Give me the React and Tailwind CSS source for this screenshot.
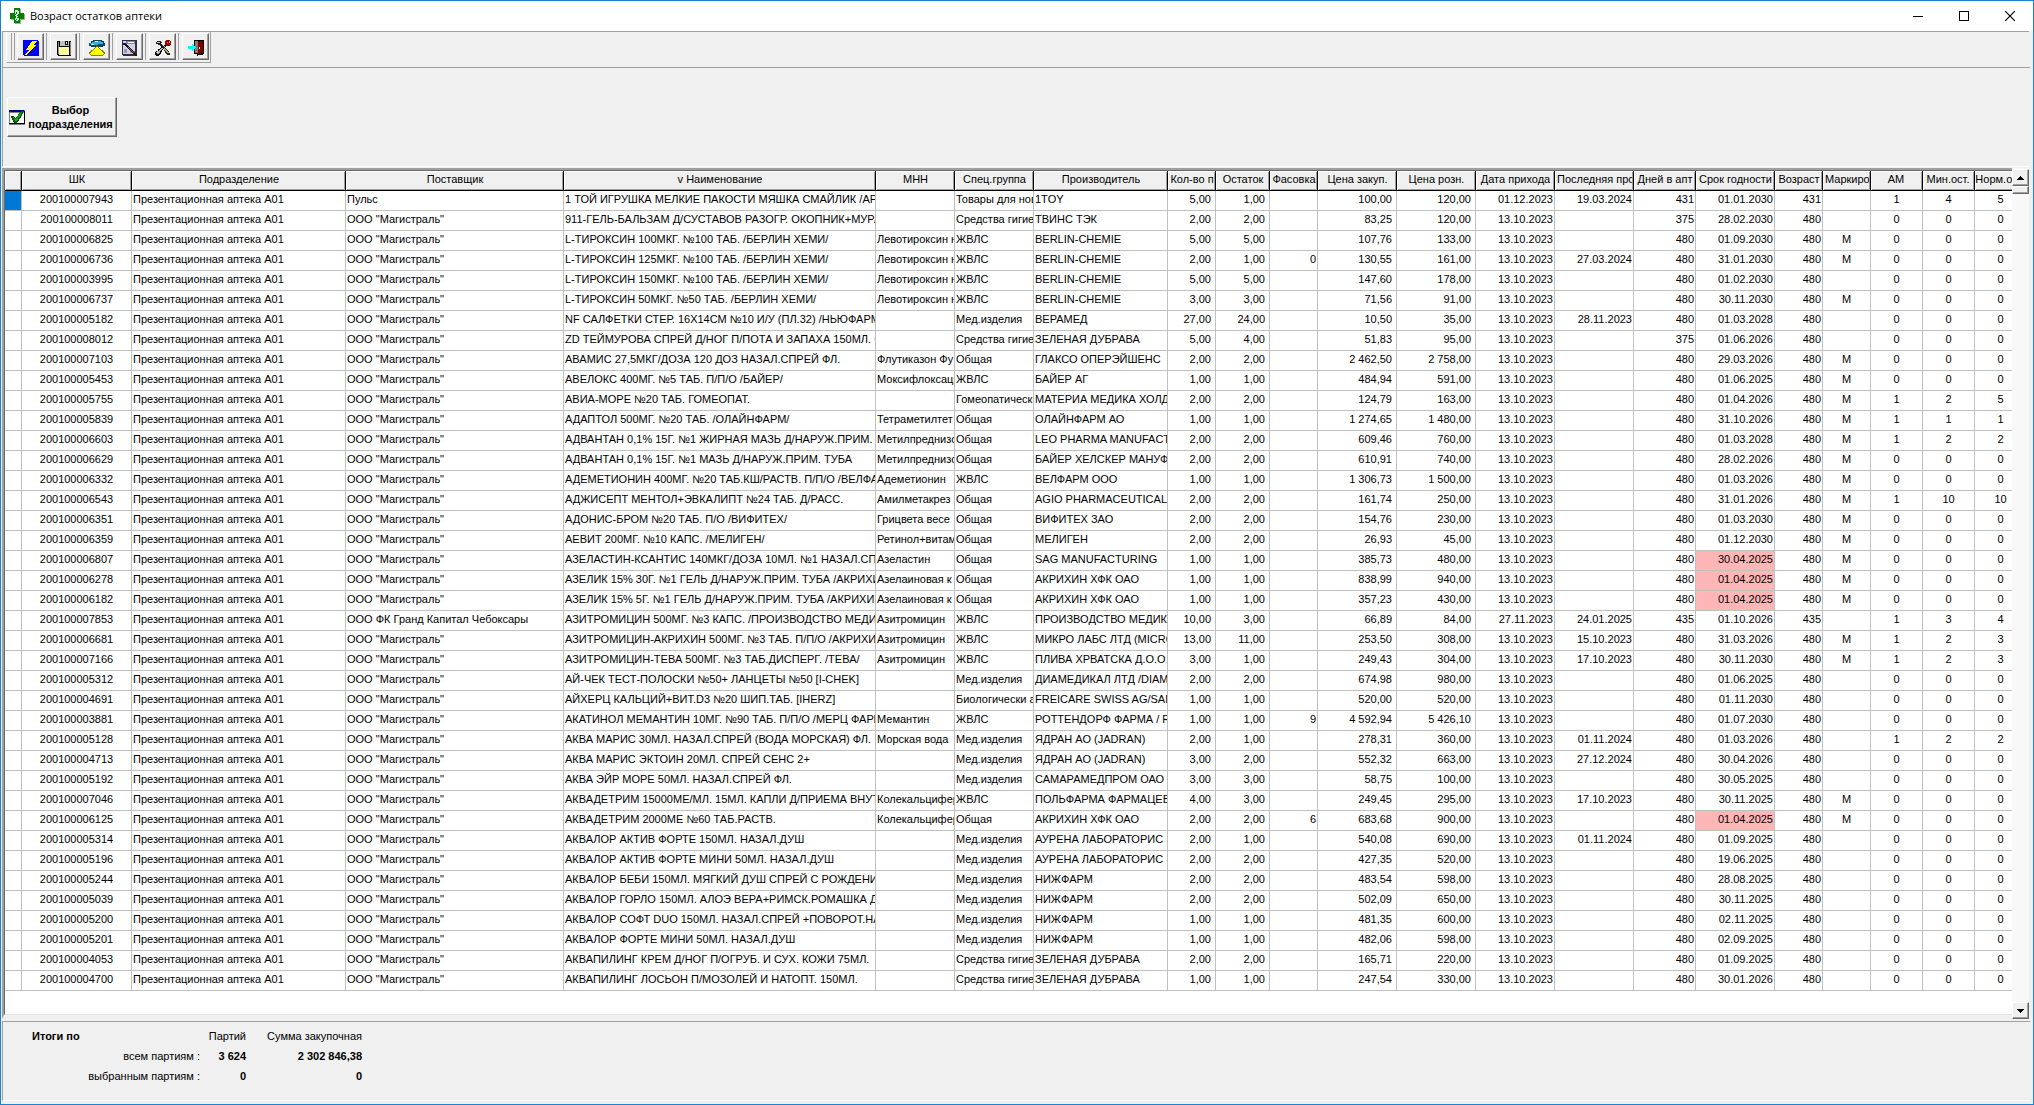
import clsx from 'clsx'

const COLUMNS = [
  { title: '', width: 'w-[17px]' },
  { title: 'ШК', width: 'w-[110px]', align: 'text-center' },
  { title: 'Подразделение', width: 'w-[214px]', align: 'text-left pl-px' },
  { title: 'Поставщик', width: 'w-[218px]', align: 'text-left pl-px' },
  { title: 'v Наименование', width: 'w-[312px]', align: 'text-left pl-px' },
  { title: 'МНН', width: 'w-[79px]', align: 'text-left pl-px' },
  { title: 'Спец.группа', width: 'w-[79px]', align: 'text-left pl-px' },
  { title: 'Производитель', width: 'w-[134px]', align: 'text-left pl-px' },
  { title: 'Кол-во п', width: 'w-[48px]', align: 'text-right pr-1' },
  { title: 'Остаток', width: 'w-[54px]', align: 'text-right pr-1' },
  { title: 'Фасовка', width: 'w-[48px]', align: 'text-right pr-px' },
  { title: 'Цена закуп.', width: 'w-[79px]', align: 'text-right pr-1' },
  { title: 'Цена розн.', width: 'w-[79px]', align: 'text-right pr-1' },
  { title: 'Дата прихода', width: 'w-[79px]', align: 'text-right pr-px' },
  { title: 'Последняя про', width: 'w-[79px]', align: 'text-right pr-px' },
  { title: 'Дней в апт', width: 'w-[62px]', align: 'text-right pr-px' },
  { title: 'Срок годности', width: 'w-[79px]', align: 'text-right pr-px' },
  { title: 'Возраст', width: 'w-[48px]', align: 'text-right pr-px' },
  { title: 'Маркиро', width: 'w-[48px]', align: 'text-center' },
  { title: 'АМ', width: 'w-[52px]', align: 'text-center' },
  { title: 'Мин.ост.', width: 'w-[52px]', align: 'text-center' },
  { title: 'Норм.ост.', width: 'w-[52px]', align: 'text-center' },
]

const EXPIRY = 16
const EXPIRING = ['30.04.2025', '01.04.2025']

const DEPT = 'Презентационная аптека А01'
const MAG = 'ООО "Магистраль"'
const D = '13.10.2023'

// code, supplier, name, INN, group, maker, qty, rest, pack, buy, sell, arrived, last sale, days, expiry, age, mark, AM, min, norm
const ROWS = [
  ['200100007943', 'Пульс', '1 ТОЙ ИГРУШКА МЕЛКИЕ ПАКОСТИ МЯШКА СМАЙЛИК /АР', '', 'Товары для нов', '1TOY', '5,00', '1,00', '', '100,00', '120,00', '01.12.2023', '19.03.2024', 431, '01.01.2030', 431, '', 1, 4, 5],
  ['200100008011', MAG, '911-ГЕЛЬ-БАЛЬЗАМ Д/СУСТАВОВ РАЗОГР. ОКОПНИК+МУРА', '', 'Средства гигие', 'ТВИНС ТЭК', '2,00', '2,00', '', '83,25', '120,00', D, '', 375, '28.02.2030', 480, '', 0, 0, 0],
  ['200100006825', MAG, 'L-ТИРОКСИН 100МКГ. №100 ТАБ. /БЕРЛИН ХЕМИ/', 'Левотироксин н', 'ЖВЛС', 'BERLIN-CHEMIE', '5,00', '5,00', '', '107,76', '133,00', D, '', 480, '01.09.2030', 480, 'M', 0, 0, 0],
  ['200100006736', MAG, 'L-ТИРОКСИН 125МКГ. №100 ТАБ. /БЕРЛИН ХЕМИ/', 'Левотироксин н', 'ЖВЛС', 'BERLIN-CHEMIE', '2,00', '1,00', '0', '130,55', '161,00', D, '27.03.2024', 480, '31.01.2030', 480, 'M', 0, 0, 0],
  ['200100003995', MAG, 'L-ТИРОКСИН 150МКГ. №100 ТАБ. /БЕРЛИН ХЕМИ/', 'Левотироксин н', 'ЖВЛС', 'BERLIN-CHEMIE', '5,00', '5,00', '', '147,60', '178,00', D, '', 480, '01.02.2030', 480, '', 0, 0, 0],
  ['200100006737', MAG, 'L-ТИРОКСИН 50МКГ. №50 ТАБ. /БЕРЛИН ХЕМИ/', 'Левотироксин н', 'ЖВЛС', 'BERLIN-CHEMIE', '3,00', '3,00', '', '71,56', '91,00', D, '', 480, '30.11.2030', 480, 'M', 0, 0, 0],
  ['200100005182', MAG, 'NF САЛФЕТКИ СТЕР. 16Х14СМ №10 И/У (ПЛ.32) /НЬЮФАРМ/', '', 'Мед.изделия', 'ВЕРАМЕД', '27,00', '24,00', '', '10,50', '35,00', D, '28.11.2023', 480, '01.03.2028', 480, '', 0, 0, 0],
  ['200100008012', MAG, 'ZD ТЕЙМУРОВА СПРЕЙ Д/НОГ П/ПОТА И ЗАПАХА 150МЛ. ФЛ', '', 'Средства гигие', 'ЗЕЛЕНАЯ ДУБРАВА', '5,00', '4,00', '', '51,83', '95,00', D, '', 375, '01.06.2026', 480, '', 0, 0, 0],
  ['200100007103', MAG, 'АВАМИС 27,5МКГ/ДОЗА 120 ДОЗ НАЗАЛ.СПРЕЙ ФЛ.', 'Флутиказон Фу', 'Общая', 'ГЛАКСО ОПЕРЭЙШЕНС', '2,00', '2,00', '', '2 462,50', '2 758,00', D, '', 480, '29.03.2026', 480, 'M', 0, 0, 0],
  ['200100005453', MAG, 'АВЕЛОКС 400МГ. №5 ТАБ. П/П/О /БАЙЕР/', 'Моксифлоксаци', 'ЖВЛС', 'БАЙЕР АГ', '1,00', '1,00', '', '484,94', '591,00', D, '', 480, '01.06.2025', 480, 'M', 0, 0, 0],
  ['200100005755', MAG, 'АВИА-МОРЕ №20 ТАБ. ГОМЕОПАТ.', '', 'Гомеопатическ', 'МАТЕРИА МЕДИКА ХОЛД', '2,00', '2,00', '', '124,79', '163,00', D, '', 480, '01.04.2026', 480, 'M', 1, 2, 5],
  ['200100005839', MAG, 'АДАПТОЛ 500МГ. №20 ТАБ. /ОЛАЙНФАРМ/', 'Тетраметилтет', 'Общая', 'ОЛАЙНФАРМ АО', '1,00', '1,00', '', '1 274,65', '1 480,00', D, '', 480, '31.10.2026', 480, 'M', 1, 1, 1],
  ['200100006603', MAG, 'АДВАНТАН 0,1% 15Г. №1 ЖИРНАЯ МАЗЬ Д/НАРУЖ.ПРИМ.', 'Метилпреднизо', 'Общая', 'LEO PHARMA MANUFACTU', '2,00', '2,00', '', '609,46', '760,00', D, '', 480, '01.03.2028', 480, 'M', 1, 2, 2],
  ['200100006629', MAG, 'АДВАНТАН 0,1% 15Г. №1 МАЗЬ Д/НАРУЖ.ПРИМ. ТУБА', 'Метилпреднизо', 'Общая', 'БАЙЕР ХЕЛСКЕР МАНУФЭ', '2,00', '2,00', '', '610,91', '740,00', D, '', 480, '28.02.2026', 480, 'M', 0, 0, 0],
  ['200100006332', MAG, 'АДЕМЕТИОНИН 400МГ. №20 ТАБ.КШ/РАСТВ. П/П/О /ВЕЛФАР', 'Адеметионин', 'ЖВЛС', 'ВЕЛФАРМ ООО', '1,00', '1,00', '', '1 306,73', '1 500,00', D, '', 480, '01.03.2026', 480, 'M', 0, 0, 0],
  ['200100006543', MAG, 'АДЖИСЕПТ МЕНТОЛ+ЭВКАЛИПТ №24 ТАБ. Д/РАСС.', 'Амилметакрез', 'Общая', 'AGIO PHARMACEUTICAL LT', '2,00', '2,00', '', '161,74', '250,00', D, '', 480, '31.01.2026', 480, 'M', 1, 10, 10],
  ['200100006351', MAG, 'АДОНИС-БРОМ №20 ТАБ. П/О /ВИФИТЕХ/', 'Грицвета весе', 'Общая', 'ВИФИТЕХ ЗАО', '2,00', '2,00', '', '154,76', '230,00', D, '', 480, '01.03.2030', 480, 'M', 0, 0, 0],
  ['200100006359', MAG, 'АЕВИТ 200МГ. №10 КАПС. /МЕЛИГЕН/', 'Ретинол+витам', 'Общая', 'МЕЛИГЕН', '2,00', '2,00', '', '26,93', '45,00', D, '', 480, '01.12.2030', 480, 'M', 0, 0, 0],
  ['200100006807', MAG, 'АЗЕЛАСТИН-КСАНТИС 140МКГ/ДОЗА 10МЛ. №1 НАЗАЛ.СПР', 'Азеластин', 'Общая', 'SAG MANUFACTURING', '1,00', '1,00', '', '385,73', '480,00', D, '', 480, '30.04.2025', 480, 'M', 0, 0, 0],
  ['200100006278', MAG, 'АЗЕЛИК 15% 30Г. №1 ГЕЛЬ Д/НАРУЖ.ПРИМ. ТУБА /АКРИХИ', 'Азелаиновая к', 'Общая', 'АКРИХИН ХФК ОАО', '1,00', '1,00', '', '838,99', '940,00', D, '', 480, '01.04.2025', 480, 'M', 0, 0, 0],
  ['200100006182', MAG, 'АЗЕЛИК 15% 5Г. №1 ГЕЛЬ Д/НАРУЖ.ПРИМ. ТУБА /АКРИХИ', 'Азелаиновая к', 'Общая', 'АКРИХИН ХФК ОАО', '1,00', '1,00', '', '357,23', '430,00', D, '', 480, '01.04.2025', 480, 'M', 0, 0, 0],
  ['200100007853', 'ООО ФК Гранд Капитал Чебоксары', 'АЗИТРОМИЦИН 500МГ. №3 КАПС. /ПРОИЗВОДСТВО МЕДИК', 'Азитромицин', 'ЖВЛС', 'ПРОИЗВОДСТВО МЕДИКА', '10,00', '3,00', '', '66,89', '84,00', '27.11.2023', '24.01.2025', 435, '01.10.2026', 435, '', 1, 3, 4],
  ['200100006681', MAG, 'АЗИТРОМИЦИН-АКРИХИН 500МГ. №3 ТАБ. П/П/О /АКРИХИ', 'Азитромицин', 'ЖВЛС', 'МИКРО ЛАБС ЛТД (MICRO', '13,00', '11,00', '', '253,50', '308,00', D, '15.10.2023', 480, '31.03.2026', 480, 'M', 1, 2, 3],
  ['200100007166', MAG, 'АЗИТРОМИЦИН-ТЕВА 500МГ. №3 ТАБ.ДИСПЕРГ. /ТЕВА/', 'Азитромицин', 'ЖВЛС', 'ПЛИВА ХРВАТСКА Д.О.О.', '3,00', '1,00', '', '249,43', '304,00', D, '17.10.2023', 480, '30.11.2030', 480, 'M', 1, 2, 3],
  ['200100005312', MAG, 'АЙ-ЧЕК ТЕСТ-ПОЛОСКИ №50+ ЛАНЦЕТЫ №50 [I-CHEK]', '', 'Мед.изделия', 'ДИАМЕДИКАЛ ЛТД /DIAM', '2,00', '2,00', '', '674,98', '980,00', D, '', 480, '01.06.2025', 480, '', 0, 0, 0],
  ['200100004691', MAG, 'АЙХЕРЦ КАЛЬЦИЙ+ВИТ.D3 №20 ШИП.ТАБ. [IHERZ]', '', 'Биологически а', 'FREICARE SWISS AG/SANO', '1,00', '1,00', '', '520,00', '520,00', D, '', 480, '01.11.2030', 480, '', 0, 0, 0],
  ['200100003881', MAG, 'АКАТИНОЛ МЕМАНТИН 10МГ. №90 ТАБ. П/П/О /МЕРЦ ФАРМА', 'Мемантин', 'ЖВЛС', 'РОТТЕНДОРФ ФАРМА / RO', '1,00', '1,00', '9', '4 592,94', '5 426,10', D, '', 480, '01.07.2030', 480, '', 0, 0, 0],
  ['200100005128', MAG, 'АКВА МАРИС 30МЛ. НАЗАЛ.СПРЕЙ (ВОДА МОРСКАЯ) ФЛ.', 'Морская вода', 'Мед.изделия', 'ЯДРАН АО (JADRAN)', '2,00', '1,00', '', '278,31', '360,00', D, '01.11.2024', 480, '01.03.2026', 480, '', 1, 2, 2],
  ['200100004713', MAG, 'АКВА МАРИС ЭКТОИН 20МЛ. СПРЕЙ СЕНС 2+', '', 'Мед.изделия', 'ЯДРАН АО (JADRAN)', '3,00', '2,00', '', '552,32', '663,00', D, '27.12.2024', 480, '30.04.2026', 480, '', 0, 0, 0],
  ['200100005192', MAG, 'АКВА ЭЙР МОРЕ 50МЛ. НАЗАЛ.СПРЕЙ ФЛ.', '', 'Мед.изделия', 'САМАРАМЕДПРОМ ОАО', '3,00', '3,00', '', '58,75', '100,00', D, '', 480, '30.05.2025', 480, '', 0, 0, 0],
  ['200100007046', MAG, 'АКВАДЕТРИМ 15000МЕ/МЛ. 15МЛ. КАПЛИ Д/ПРИЕМА ВНУТР', 'Колекальцифер', 'ЖВЛС', 'ПОЛЬФАРМА ФАРМАЦЕВТ', '4,00', '3,00', '', '249,45', '295,00', D, '17.10.2023', 480, '30.11.2025', 480, 'M', 0, 0, 0],
  ['200100006125', MAG, 'АКВАДЕТРИМ 2000МЕ №60 ТАБ.РАСТВ.', 'Колекальцифер', 'Общая', 'АКРИХИН ХФК ОАО', '2,00', '2,00', '6', '683,68', '900,00', D, '', 480, '01.04.2025', 480, 'M', 0, 0, 0],
  ['200100005314', MAG, 'АКВАЛОР АКТИВ ФОРТЕ 150МЛ. НАЗАЛ.ДУШ', '', 'Мед.изделия', 'АУРЕНА ЛАБОРАТОРИС Э', '2,00', '1,00', '', '540,08', '690,00', D, '01.11.2024', 480, '01.09.2025', 480, '', 0, 0, 0],
  ['200100005196', MAG, 'АКВАЛОР АКТИВ ФОРТЕ МИНИ 50МЛ. НАЗАЛ.ДУШ', '', 'Мед.изделия', 'АУРЕНА ЛАБОРАТОРИС Э', '2,00', '2,00', '', '427,35', '520,00', D, '', 480, '19.06.2025', 480, '', 0, 0, 0],
  ['200100005244', MAG, 'АКВАЛОР БЕБИ 150МЛ. МЯГКИЙ ДУШ СПРЕЙ С РОЖДЕНИЯ', '', 'Мед.изделия', 'НИЖФАРМ', '2,00', '2,00', '', '483,54', '598,00', D, '', 480, '28.08.2025', 480, '', 0, 0, 0],
  ['200100005039', MAG, 'АКВАЛОР ГОРЛО 150МЛ. АЛОЭ ВЕРА+РИМСК.РОМАШКА ДУ', '', 'Мед.изделия', 'НИЖФАРМ', '2,00', '2,00', '', '502,09', '650,00', D, '', 480, '30.11.2025', 480, '', 0, 0, 0],
  ['200100005200', MAG, 'АКВАЛОР СОФТ DUO 150МЛ. НАЗАЛ.СПРЕЙ +ПОВОРОТ.НАС.', '', 'Мед.изделия', 'НИЖФАРМ', '1,00', '1,00', '', '481,35', '600,00', D, '', 480, '02.11.2025', 480, '', 0, 0, 0],
  ['200100005201', MAG, 'АКВАЛОР ФОРТЕ МИНИ 50МЛ. НАЗАЛ.ДУШ', '', 'Мед.изделия', 'НИЖФАРМ', '1,00', '1,00', '', '482,06', '598,00', D, '', 480, '02.09.2025', 480, '', 0, 0, 0],
  ['200100004053', MAG, 'АКВАПИЛИНГ КРЕМ Д/НОГ П/ОГРУБ. И СУХ. КОЖИ 75МЛ.', '', 'Средства гигие', 'ЗЕЛЕНАЯ ДУБРАВА', '2,00', '2,00', '', '165,71', '220,00', D, '', 480, '01.09.2025', 480, '', 0, 0, 0],
  ['200100004700', MAG, 'АКВАПИЛИНГ ЛОСЬОН П/МОЗОЛЕЙ И НАТОПТ. 150МЛ.', '', 'Средства гигие', 'ЗЕЛЕНАЯ ДУБРАВА', '1,00', '1,00', '', '247,54', '330,00', D, '', 480, '30.01.2026', 480, '', 0, 0, 0],
]

const RAISED = 'border border-t-white border-l-white border-r-[#696969] border-b-[#696969] shadow-[inset_-1px_-1px_0_#a0a0a0]'

function Pixels({ children, className = 'w-4 h-4' }) {
  return (
    <svg viewBox="0 0 16 16" className={className} shapeRendering="crispEdges" aria-hidden="true">
      {children}
    </svg>
  )
}

function AppIcon() {
  return (
    <Pixels>
      <path d="M6 1h6v5h4v6h-4v4H6v-4H2V6h4z" fill="#a8a8a8" />
      <path d="M5 0h6v5h4v6h-4v4H5v-4H1V5h4z" fill="#008000" />
      <path d="M6 2h3v1h1v3H9v1H8v1h1v1H8v1h2v2H9v1H7v-1H6v-2h1V8H6V7h1V6H6z" fill="#d8f0d8" />
      <path d="M7 4h1v2H7zM8 9h1v1H8zM7 11h1v1H7z" fill="#008000" />
    </Pixels>
  )
}

function LightningIcon() {
  return (
    <Pixels>
      <path d="M0 0h15v1h1v15H1v-1H0z" fill="#0000ff" />
      <path d="M9 1h5v1h-1v1h-1v1h-1v1h2v1h-1v1h-1v1h-1v1H9v1H8v1H7v1H6v1H5v1H4v1H2v-1h1v-1h1v-1h1v-1h1v-1H3V9h1V8h1V6h1V5h1V3h1V2h1z" fill="#ffff00" />
      <path d="M13 2h1v1h-1zM12 3h1v1h-1zM12 6h1v1h-1zM11 7h1v1h-1zM10 8h1v1h-1zM9 9h1v1H9zM8 10h1v1H8zM7 11h1v1H7zM6 12h1v1H6zM5 13h1v1H5z" fill="#000" />
    </Pixels>
  )
}

function FloppyIcon() {
  return (
    <Pixels>
      <path d="M1 1h14v15H2v-1H1z" fill="#000" />
      <path d="M2 2h1v12H2z" fill="#909090" />
      <path d="M4 1h9v5H4z" fill="#c0c0c0" />
      <path d="M9 1h3v4H9z" fill="#000" />
      <path d="M10 2h1v2h-1z" fill="#fff" />
      <path d="M3 7h10v8H3z" fill="#ffff9c" />
      <path d="M14 2h1v13h-1z" fill="#808080" />
    </Pixels>
  )
}

function LampIcon() {
  return (
    <Pixels>
      <path d="M7 6h2v1h1v1h1v1h1v1h2v1h1v1h1v2h-1v1h-1v1H2v-1H1v-1H0v-2h1v-1h1v-1h2V9h1V8h1V7h1z" fill="#808000" />
      <path d="M7 7h2v1h1v1h1v1h1v1h1v1h1v1h1v1h-1v1H2v-1H1v-1h1v-1h1v-1h1v-1h1V9h1V8h1z" fill="#ffff00" />
      <path d="M4 0h9v1h2v2h1v3h-2v1H9V6H7v1H2V6H0V3h2V1h2z" fill="#004868" />
      <path d="M5 1h7v1h2v2H9v1H4V4H1V3h2V2h2z" fill="#48a8d8" />
      <path d="M6 1h3v1H6zM2 4h3v1H2z" fill="#c0f0ff" />
    </Pixels>
  )
}

function EditFormIcon() {
  return (
    <Pixels>
      <path d="M0 0h15v16H1v-1H0z" fill="#303040" />
      <path d="M1 1h12v13H1z" fill="#d0d0e8" />
      <path d="M4 1h9v3H4z" fill="#8080d8" />
      <path d="M6 2h6v1H6z" fill="#fff" />
      <path d="M2 9h3v4H2zM8 11h5v2H8z" fill="#9898b0" />
      <path d="M1 3h3v1h1v1h1v1h1v1h1v1h1v1h1v1h1v1h1v1h1v1h1v1h1v2h-2v-1h-1v-1h-1v-1h-1v-1H9v-1H8v-1H7V9H6V8H5V7H4V6H3V5H1z" fill="#201818" />
      <path d="M6 7h1v1h1v1h1v1h1v1h1v1h1v1h-1v-1h-1v-1H9v-1H8V9H7V8H6z" fill="#905840" />
    </Pixels>
  )
}

function ToolsIcon() {
  return (
    <Pixels>
      <path d="M11 0h4v1h1v4h-1v1h-4V5h-1V1h1z" fill="#900000" />
      <path d="M12 2h1v1h-1zM14 1h1v2h-1z" fill="#ff8080" />
      <path d="M9 5h2v2h-1v1H9v1H8v1H7v2H6v2H5v1H4v1H1v-1H0v-3h1v-1h2V9h2V8h1V7h2V6h1z" fill="#000" />
      <path d="M9 6h1v1H9v1H8v1H7v1H6v1H5v2H4v1H2v-1H1v-1h1v-1h2v-1h1V9h1V8h2V7h1z" fill="#b8b8b8" />
      <path d="M1 2h1V1h4v1h1v1H6v1h1v1h1v1h1v1h1v1h1v1h1v1h1v1h1v2h1v2h-3v-1h-1v-1h-1v-2H9V9H8V8H7V7H6V6H5V5H3V4H1z" fill="#202020" />
      <path d="M2 2h3v1H2z" fill="#c8c8c8" />
      <path d="M9 8h1v1h1v1h1v1h1v1h1v1h-2v-1h-1v-1h-1v-1H9z" fill="#c0b080" />
    </Pixels>
  )
}

function ExitIcon() {
  return (
    <Pixels>
      <path d="M6 0h10v14h-1v1h-5v1H9v-2H6z" fill="#000" />
      <path d="M7 1h3v12H7z" fill="#808080" />
      <path d="M10 2h2V1h3v12h-2v1h-3z" fill="#800000" />
      <path d="M11 7h1v2h-1z" fill="#fff" />
      <path d="M0 6h4V4h1v1h1v1h1v1h1v1H7v1H6v1H5v1H4V9H0z" fill="#00ffff" />
    </Pixels>
  )
}

function CheckIcon() {
  return (
    <Pixels className="w-4 h-4 shrink-0">
      <path d="M0 1h16v15H0z" fill="#808080" />
      <path d="M1 4h14v10H1z" fill="#fff" />
      <path d="M0 1h15v2H0z" fill="#000080" />
      <path d="M0 14h16v1H0zM15 2h1v13h-1z" fill="#000" />
      <path d="M12 2h3v1h-1v2h-1v2h-1v2h-1v1h-1v2H9v1H8v1H5v-1H4v-2H3V9H2V7h3v1h1v1h1V8h1V7h1V5h1V4h1V3h1z" fill="#006000" />
      <path d="M12 3h1v1h-1v2h-1v2h-1v1H9v2H8v1H6v-1H5V9H4V8h1v1h1v1h1V9h1V8h1V6h1V5h1V4h1z" fill="#20a020" />
    </Pixels>
  )
}

const TOOLS = [
  { label: 'Обновить', Icon: LightningIcon },
  { label: 'Сохранить', Icon: FloppyIcon },
  { label: 'Фильтр', Icon: LampIcon },
  { label: 'Редактировать', Icon: EditFormIcon },
  { label: 'Настройки', Icon: ToolsIcon },
  { label: 'Выход', Icon: ExitIcon },
]

function TitleBar() {
  return (
    <header className="flex items-center h-[30px] pl-2 bg-white">
      <AppIcon />
      <h1 className="ml-[5px] flex-1 font-['Open_Sans','Noto_Sans',sans-serif] text-[11px]">Возраст остатков аптеки</h1>
      <button aria-label="Свернуть" className="w-[46px] h-[30px] flex items-center justify-center">
        <svg viewBox="0 0 10 10" className="w-2.5 h-2.5" shapeRendering="crispEdges"><path d="M0 5h10v1H0z" /></svg>
      </button>
      <button aria-label="Развернуть" className="w-[46px] h-[30px] flex items-center justify-center">
        <svg viewBox="0 0 10 10" className="w-2.5 h-2.5" shapeRendering="crispEdges"><path d="M0 0h10v10H0zM1 1v8h8V1z" fillRule="evenodd" /></svg>
      </button>
      <button aria-label="Закрыть" className="w-[46px] h-[30px] flex items-center justify-center">
        <svg viewBox="0 0 10 10" className="w-2.5 h-2.5"><path d="M0 0l10 10M10 0L0 10" stroke="#000" strokeWidth="1.2" /></svg>
      </button>
    </header>
  )
}

function Toolbar() {
  return (
    <div className="h-9 ml-px mr-1 border-t border-l border-[#a0a0a0]">
      <div className="h-[31px] w-[205px] ml-[3px] flex items-start pt-px border-l border-l-white border-r border-r-[#a0a0a0] border-b border-b-[#a0a0a0]">
        <span className="w-px h-[27px] ml-1 bg-[#a0a0a0]" />
        <span className="w-px h-[27px] ml-0.5 bg-[#a0a0a0]" />
        <div className="flex gap-0.5 ml-0.5">
          {TOOLS.map(({ label, Icon }, i) => (
            <div key={label} className="flex gap-[3px]">
              {i > 0 && <span className="w-px h-[27px] bg-[#a0a0a0]" />}
              <button aria-label={label} className={clsx('w-[27px] h-[27px] pt-0.5 pl-px flex items-center justify-center', RAISED)}>
                <Icon />
              </button>
            </div>
          ))}
        </div>
      </div>
    </div>
  )
}

function StockTable() {
  return (
    <table className="table-fixed w-0 border-separate border-spacing-0 whitespace-nowrap">
      <colgroup>
        {COLUMNS.map((c, i) => <col key={i} className={c.width} />)}
      </colgroup>
      <thead>
        <tr className="h-5">
          {COLUMNS.map((c, i) => (
            <th
              key={i}
              scope="col"
              className="p-0 align-top font-normal overflow-hidden bg-[#f0f0f0] border-r border-b border-black shadow-[inset_1px_1px_0_#fff,inset_-1px_-1px_0_#a0a0a0]"
            >
              <div className={clsx('overflow-hidden mr-px leading-4', c.width !== 'w-[52px]' && 'pl-0.5')}>{c.title}</div>
            </th>
          ))}
        </tr>
      </thead>
      <tbody>
        {ROWS.map((row, r) => {
          const [code, ...rest] = row
          const cells = ['', code, DEPT, ...rest]
          return (
            <tr key={code} className="h-5">
              {cells.map((value, i) => (
                <td
                  key={i}
                  className={clsx(
                    'p-0 align-top border-r border-b border-[#c0c0c0]',
                    i === 0 && r === 0 && 'bg-[#0078d7]',
                    i === EXPIRY && EXPIRING.includes(value) && 'bg-[#ffb6b6]'
                  )}
                >
                  <div className={clsx('overflow-hidden leading-[17px]', COLUMNS[i].align)}>{value}</div>
                </td>
              ))}
            </tr>
          )
        })}
      </tbody>
    </table>
  )
}

function ScrollBar() {
  return (
    <div className="w-[17px] shrink-0 flex flex-col pt-px bg-[#f8f8f8]">
      <button aria-label="Вверх" className={clsx('h-[17px] flex items-center justify-center bg-[#f0f0f0]', RAISED)}>
        <svg viewBox="0 0 7 4" className="w-[7px] h-1" shapeRendering="crispEdges"><path d="M3 0h1v1h1v1h1v1h1v1H0V3h1V2h1V1h1z" /></svg>
      </button>
      <div className={clsx('h-2 bg-[#f0f0f0]', RAISED)} />
      <div className="flex-1" />
      <button aria-label="Вниз" className={clsx('h-[17px] flex items-center justify-center bg-[#f0f0f0]', RAISED)}>
        <svg viewBox="0 0 7 4" className="w-[7px] h-1" shapeRendering="crispEdges"><path d="M0 0h7v1H6v1H5v1H4v1H3V3H2V2H1V1H0z" /></svg>
      </button>
    </div>
  )
}

function Totals() {
  return (
    <footer className="h-20 ml-px mr-[3px] mb-[3px] pt-1 border-t border-l border-[#a0a0a0] border-b border-b-white">
      <table className="table-fixed w-[330px] ml-[29px]">
        <thead>
          <tr className="h-5">
            <th scope="col" className="w-[168px] p-0 text-left">Итоги по</th>
            <th scope="col" className="w-[46px] p-0 text-right font-normal">Партий</th>
            <th scope="col" className="w-[116px] p-0 text-right font-normal">Сумма закупочная</th>
          </tr>
        </thead>
        <tbody>
          <tr className="h-5">
            <th scope="row" className="p-0 text-right font-normal">всем партиям :</th>
            <td className="p-0 text-right font-bold">3 624</td>
            <td className="p-0 text-right font-bold">2 302 846,38</td>
          </tr>
          <tr className="h-5">
            <th scope="row" className="p-0 text-right font-normal">выбранным партиям :</th>
            <td className="p-0 text-right font-bold">0</td>
            <td className="p-0 text-right font-bold">0</td>
          </tr>
        </tbody>
      </table>
    </footer>
  )
}

export default function App() {
  return (
    <div className="min-h-screen flex flex-col border border-[#1883d7] bg-[#f0f0f0] text-black text-[11px] leading-[14px] font-['Liberation_Sans',Arial,sans-serif]">
      <TitleBar />
      <Toolbar />
      <section className="h-[100px] ml-px mr-[3px] pt-[29px] pl-1 border-t border-l border-[#a0a0a0] border-b border-b-white">
        <button className={clsx('w-[110px] h-10 pl-px flex items-center font-bold', RAISED)}>
          <CheckIcon />
          <span className="flex-1 text-center whitespace-nowrap">Выбор<br />подразделения</span>
        </button>
      </section>
      <main className="flex-1 flex mt-px ml-px mr-1 mb-0.5">
        <div className="flex-1 min-w-0 flex flex-col border-t-2 border-l-2 border-[#a0a0a0] border-b-4 border-b-[#f0f0f0]">
          <div className="flex-1 overflow-hidden bg-white border-t border-l border-[#696969] border-b border-b-[#e3e3e3]">
            <StockTable />
          </div>
        </div>
        <ScrollBar />
      </main>
      <Totals />
    </div>
  )
}
